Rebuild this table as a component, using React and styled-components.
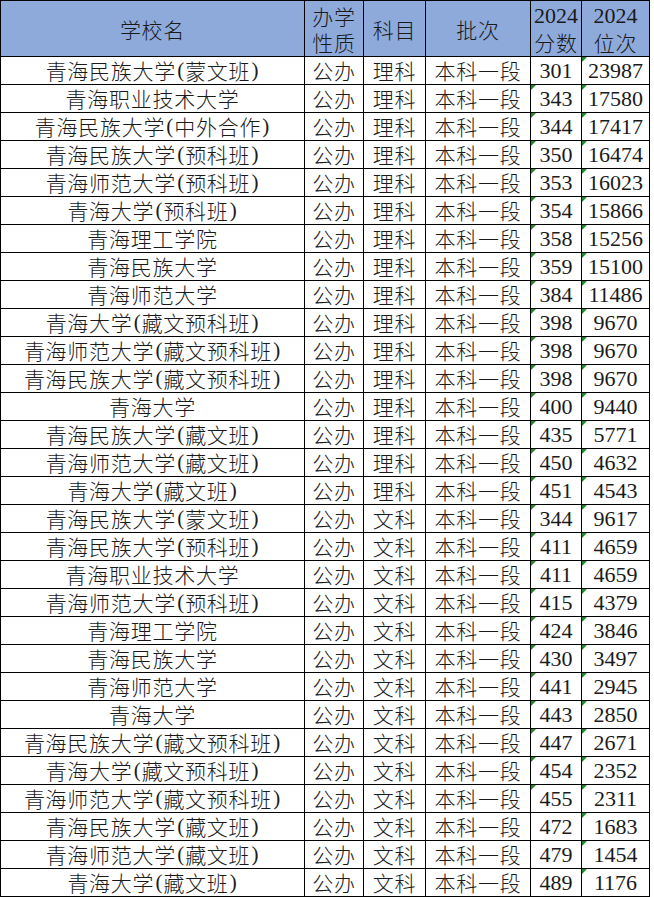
import React from 'react';
import styled, { createGlobalStyle, css } from 'styled-components';

const GlobalStyle = createGlobalStyle`
  html, body {
    margin: 0;
    padding: 0;
    background: #fff;
  }
`;

const Sheet = styled.div`
  display: grid;
  grid-template-columns: 303px 58px 61px 104px 50px 67px;
  grid-template-rows: 55px;
  grid-auto-rows: 27px;
  gap: 1px;
  padding: 1px;
  width: max-content;
  background: #000;
  font-family: "Liberation Serif", "Noto Sans CJK SC", serif;
  font-size: 21px;
  color: #1a1a1a;
`;

const Cell = styled.div`
  position: relative;
  display: flex;
  align-items: center;
  justify-content: center;
  background: #fff;
  white-space: nowrap;
  line-height: 1;

  ${props => props.$num && css`
    font-size: 22px;
  `}

  ${props => props.$flag && css`
    &::before {
      content: "";
      position: absolute;
      top: 0;
      left: 0;
      border-top: 5px solid #1f8a2c;
      border-right: 5px solid transparent;
    }
  `}
`;

const HeadCell = styled(Cell)`
  flex-direction: column;
  background: #8eaadb;
  line-height: 26px;
`;

const Cjk = styled.span`
  font-family: "Noto Sans CJK SC", sans-serif;
  font-weight: 300;
  letter-spacing: 0.75px;
`;

const Bracket = styled.span`
  padding: 0 1px;
`;

const Digits = styled.span`
  font-size: 22px;
`;

const rows = [
  ['青海民族大学(蒙文班)', '理科', 301, 23987],
  ['青海职业技术大学', '理科', 343, 17580],
  ['青海民族大学(中外合作)', '理科', 344, 17417],
  ['青海民族大学(预科班)', '理科', 350, 16474],
  ['青海师范大学(预科班)', '理科', 353, 16023],
  ['青海大学(预科班)', '理科', 354, 15866],
  ['青海理工学院', '理科', 358, 15256],
  ['青海民族大学', '理科', 359, 15100],
  ['青海师范大学', '理科', 384, 11486],
  ['青海大学(藏文预科班)', '理科', 398, 9670],
  ['青海师范大学(藏文预科班)', '理科', 398, 9670],
  ['青海民族大学(藏文预科班)', '理科', 398, 9670],
  ['青海大学', '理科', 400, 9440],
  ['青海民族大学(藏文班)', '理科', 435, 5771],
  ['青海师范大学(藏文班)', '理科', 450, 4632],
  ['青海大学(藏文班)', '理科', 451, 4543],
  ['青海民族大学(蒙文班)', '文科', 344, 9617],
  ['青海民族大学(预科班)', '文科', 411, 4659],
  ['青海职业技术大学', '文科', 411, 4659],
  ['青海师范大学(预科班)', '文科', 415, 4379],
  ['青海理工学院', '文科', 424, 3846],
  ['青海民族大学', '文科', 430, 3497],
  ['青海师范大学', '文科', 441, 2945],
  ['青海大学', '文科', 443, 2850],
  ['青海民族大学(藏文预科班)', '文科', 447, 2671],
  ['青海大学(藏文预科班)', '文科', 454, 2352],
  ['青海师范大学(藏文预科班)', '文科', 455, 2311],
  ['青海民族大学(藏文班)', '文科', 472, 1683],
  ['青海师范大学(藏文班)', '文科', 479, 1454],
  ['青海大学(藏文班)', '文科', 489, 1176],
];

// split names so the ascii brackets keep the serif face
const renderName = (name) => {
  const parts = name.split(/([()])/).filter(Boolean);
  return parts.map((p, i) =>
    p === '(' || p === ')' ? <Bracket key={i}>{p}</Bracket> : <Cjk key={i}>{p}</Cjk>
  );
};

const App = () => {
  return (
    <>
      <GlobalStyle />
      <Sheet>
        <HeadCell><Cjk>学校名</Cjk></HeadCell>
        <HeadCell><Cjk>办学</Cjk><Cjk>性质</Cjk></HeadCell>
        <HeadCell><Cjk>科目</Cjk></HeadCell>
        <HeadCell><Cjk>批次</Cjk></HeadCell>
        <HeadCell><Digits>2024</Digits><Cjk>分数</Cjk></HeadCell>
        <HeadCell><Digits>2024</Digits><Cjk>位次</Cjk></HeadCell>
        {rows.map(([name, subject, score, rank], i) => (
          <React.Fragment key={i}>
            <Cell>{renderName(name)}</Cell>
            <Cell><Cjk>公办</Cjk></Cell>
            <Cell><Cjk>{subject}</Cjk></Cell>
            <Cell><Cjk>本科一段</Cjk></Cell>
            <Cell $num $flag={i > 0 && i < 27}>{score}</Cell>
            <Cell $num $flag>{rank}</Cell>
          </React.Fragment>
        ))}
      </Sheet>
    </>
  );
};

export default App;
